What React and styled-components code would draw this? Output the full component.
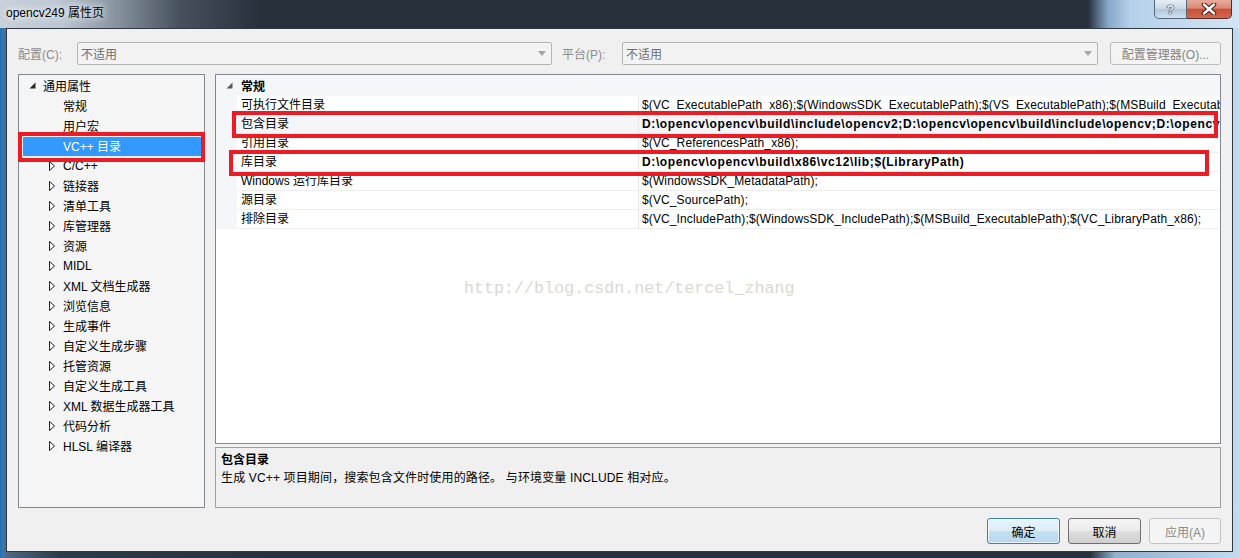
import React from "react";
import styled, { createGlobalStyle } from "styled-components";

const GlobalStyle = createGlobalStyle`
  html, body {
    margin: 0;
    padding: 0;
    background: #27313c;
  }
  body {
    font-family: "Liberation Sans", "Noto Sans CJK SC", sans-serif;
    font-size: 12px;
    color: #000;
  }
  * {
    box-sizing: border-box;
  }
`;

const Window = styled.div`
  width: 1239px;
  height: 558px;
  display: flex;
  flex-direction: column;
  overflow: hidden;
  background: linear-gradient(
    90deg,
    #1f6eb0 0px,
    #3a78ae 3px,
    #4f6984 6px,
    #2e3a47 60px,
    #27313c 300px,
    #27313c 1090px,
    #8fb0cf 1115px,
    #c4daef 1239px
  );
`;

const TitleBar = styled.div`
  height: 28px;
  display: flex;
  align-items: flex-start;
  padding-left: 6px;
  background: linear-gradient(
    90deg,
    #c9d1da 0px,
    #bcc7d2 60px,
    #8894a0 115px,
    #46515d 180px,
    #27313c 260px,
    #27313c 1088px,
    #86a7c7 1108px,
    #b6d0ea 1130px,
    #d2e4f5 1239px
  );
`;

const Caption = styled.div`
  margin-top: 6px;
  line-height: 14px;
  font-size: 12px;
  color: #000;
  text-shadow: 0 0 6px #fff, 0 0 10px rgba(255, 255, 255, 0.9);
`;

const CaptionButtons = styled.div`
  margin-left: auto;
  margin-right: 7px;
  display: flex;
`;

const HelpButton = styled.div`
  width: 33px;
  height: 19px;
  border: 1px solid #56677a;
  border-top: none;
  border-radius: 0 0 0 5px;
  background: linear-gradient(#e6edf5, #cad8e6 48%, #b3c6da 52%, #cfe0f0);
  display: flex;
  align-items: center;
  justify-content: center;
  font-weight: bold;
  font-size: 13px;
  color: #f4f7fa;
  text-shadow: 0 0 1px #1e2630, 0 0 1px #1e2630, 0 0 1px #1e2630;
`;

const CloseButton = styled.div`
  width: 45px;
  height: 19px;
  border: 1px solid #5a2a24;
  border-top: none;
  border-left: none;
  border-radius: 0 0 5px 0;
  background: linear-gradient(#e9ab9c, #d98a76 45%, #c8513a 52%, #d3694f);
  display: flex;
  align-items: center;
  justify-content: center;
`;

const Client = styled.div`
  flex: 1;
  margin: 0 6px 6px 6px;
  border: 1px solid #2e3944;
  background: #f0f0f0;
  display: flex;
  flex-direction: column;
  padding: 13px 11px 7px 11px;
`;

const ConfigRow = styled.div`
  height: 23px;
  display: flex;
  align-items: center;
`;

const FieldLabel = styled.div`
  width: ${(p) => p.w}px;
  margin-left: ${(p) => p.ml || 0}px;
  color: #8d8d8d;
`;

const Combo = styled.div`
  width: ${(p) => p.w}px;
  height: 23px;
  border: 1px solid #b4b4b4;
  border-radius: 2px;
  background: #f3f3f3;
  color: #6d6d6d;
  display: flex;
  align-items: center;
  padding: 0 5px 0 3px;
  justify-content: space-between;
`;

const ManagerButton = styled.div`
  width: 111px;
  height: 23px;
  margin-left: 12px;
  border: 1px solid #b8bcbf;
  border-radius: 3px;
  background: #f4f4f4;
  color: #838383;
  display: flex;
  align-items: center;
  justify-content: center;
`;

const Body = styled.div`
  margin-top: 9px;
  height: 434px;
  display: flex;
  gap: 10px;
`;

const TreePanel = styled.div`
  width: 187px;
  border: 1px solid #828790;
  background: #f5f5f5;
  padding-top: 2px;
  position: relative;
`;

const TreeRow = styled.div`
  height: 20px;
  display: flex;
  align-items: center;
  padding-bottom: 2px;
  margin: ${(p) => (p.selected ? "0 3px 0 4px" : "0")};
  padding-left: ${(p) => p.indent - (p.selected ? 4 : 0)}px;
  background: ${(p) => (p.selected ? "#3399ff" : "transparent")};
  border-bottom: 1px solid ${(p) => (p.selected ? "#e8f2fc" : "transparent")};
  color: ${(p) => (p.selected ? "#fff" : "#000")};
  white-space: nowrap;
`;

const Expander = styled.span`
  width: 14px;
  flex: none;
  display: flex;
  align-items: center;
`;

const Mark = styled.div`
  position: absolute;
  left: ${(p) => p.x}px;
  top: ${(p) => p.y}px;
  width: ${(p) => p.w}px;
  height: ${(p) => p.h}px;
  border: 4px solid #ed1c24;
  pointer-events: none;
`;

const RightColumn = styled.div`
  width: 1006px;
  display: flex;
  flex-direction: column;
  gap: 3px;
`;

const GridPanel = styled.div`
  height: 370px;
  border: 1px solid #828790;
  background: #fff;
  position: relative;
  overflow: hidden;
`;

const CategoryRow = styled.div`
  height: 21px;
  display: flex;
  align-items: center;
  background: #f4f6fa;
  padding-left: 10px;
  font-weight: bold;
`;

const CategoryArrow = styled.span`
  width: 15px;
  display: flex;
  align-items: center;
`;

const PropRow = styled.div`
  height: 19px;
  display: grid;
  grid-template-columns: 21px 401px 1fr;
`;

const Gutter = styled.div`
  background: #f4f6fa;
`;

const PropName = styled.div`
  padding-left: 4px;
  line-height: 19px;
  border-bottom: 1px solid #eeeeee;
  background: ${(p) => (p.selected ? "#f3f5f9" : "#fff")};
  white-space: nowrap;
  overflow: hidden;
`;

const PropValue = styled.div`
  padding-left: 3px;
  line-height: 19px;
  border-left: 1px solid #e6e6e6;
  border-bottom: 1px solid #eeeeee;
  background: ${(p) => (p.selected ? "#f3f5f9" : "#fff")};
  font-weight: ${(p) => (p.bold ? "bold" : "normal")};
  letter-spacing: ${(p) => (p.bold ? "0.62px" : "0.12px")};
  white-space: nowrap;
  overflow: hidden;
`;

const Watermark = styled.div`
  position: absolute;
  left: 248px;
  top: 204px;
  font-family: "Liberation Mono", monospace;
  font-size: 16.7px;
  color: #dcd8d0;
  white-space: nowrap;
  pointer-events: none;
`;

const DescPanel = styled.div`
  height: 61px;
  border: 1px solid #a0a0a0;
  background: #f0f0f0;
  padding: 3px 0 0 5px;
  line-height: 18px;
`;

const DescTitle = styled.div`
  font-weight: bold;
`;

const DescText = styled.div`
  letter-spacing: 0.15px;
`;

const ButtonRow = styled.div`
  margin-top: 10px;
  height: 26px;
  display: flex;
  justify-content: flex-end;
  gap: 8px;
`;

const DialogButton = styled.div`
  width: ${(p) => p.w || 73}px;
  height: 26px;
  border-radius: 3px;
  display: flex;
  align-items: center;
  justify-content: center;
  border: 1px solid
    ${(p) =>
      p.variant === "default" ? "#3c7fb1" : p.variant === "disabled" ? "#c0c4c6" : "#707070"};
  background: ${(p) =>
    p.variant === "default"
      ? "linear-gradient(#eaf4fb, #dcecf8 48%, #c4e0f3 52%, #b6d7ee)"
      : p.variant === "disabled"
      ? "#f4f4f4"
      : "linear-gradient(#f4f4f4, #ebebeb 48%, #dddddd 52%, #cfcfcf)"};
  color: ${(p) => (p.variant === "disabled" ? "#8a8a8a" : "#000")};
  box-shadow: ${(p) =>
    p.variant === "default" ? "inset 0 0 0 1px rgba(255,255,255,0.7)" : "none"};
`;

const DownArrow = () => (
  <svg width="8" height="5" viewBox="0 0 8 5">
    <polygon points="0,0 8,0 4,5" fill="#a6a6a6" />
  </svg>
);

const OpenArrow = ({ color = "#262626" }) => (
  <svg width="7" height="7" viewBox="0 0 7 7">
    <polygon points="6.5,0.5 6.5,6.5 0.5,6.5" fill={color} />
  </svg>
);

const ClosedArrow = () => (
  <svg width="6" height="10" viewBox="0 0 6 10">
    <polygon points="0.5,0.5 5.5,5 0.5,9.5" fill="#fff" stroke="#1e1e1e" strokeWidth="1" />
  </svg>
);

const CloseGlyph = () => (
  <svg width="16" height="12" viewBox="0 0 16 12">
    <path d="M3 1.5 L13 10.5 M13 1.5 L3 10.5" stroke="#4a1c16" strokeWidth="4.6" strokeLinecap="round" />
    <path d="M3 1.5 L13 10.5 M13 1.5 L3 10.5" stroke="#fff" strokeWidth="2.4" strokeLinecap="round" />
  </svg>
);

const treeItems = [
  { label: "通用属性", indent: 10, open: true },
  { label: "常规", indent: 30 },
  { label: "用户宏", indent: 30 },
  { label: "VC++ 目录", indent: 30, selected: true },
  { label: "C/C++", indent: 30, closed: true },
  { label: "链接器", indent: 30, closed: true },
  { label: "清单工具", indent: 30, closed: true },
  { label: "库管理器", indent: 30, closed: true },
  { label: "资源", indent: 30, closed: true },
  { label: "MIDL", indent: 30, closed: true },
  { label: "XML 文档生成器", indent: 30, closed: true },
  { label: "浏览信息", indent: 30, closed: true },
  { label: "生成事件", indent: 30, closed: true },
  { label: "自定义生成步骤", indent: 30, closed: true },
  { label: "托管资源", indent: 30, closed: true },
  { label: "自定义生成工具", indent: 30, closed: true },
  { label: "XML 数据生成器工具", indent: 30, closed: true },
  { label: "代码分析", indent: 30, closed: true },
  { label: "HLSL 编译器", indent: 30, closed: true },
];

const properties = [
  {
    name: "可执行文件目录",
    value:
      "$(VC_ExecutablePath_x86);$(WindowsSDK_ExecutablePath);$(VS_ExecutablePath);$(MSBuild_ExecutablePath);$(SystemRoot)\\SysWow64;$(FxCopDir);$(PATH);",
  },
  {
    name: "包含目录",
    value:
      "D:\\opencv\\opencv\\build\\include\\opencv2;D:\\opencv\\opencv\\build\\include\\opencv;D:\\opencv\\opencv\\build\\include;$(IncludePath)",
    bold: true,
    selected: true,
  },
  { name: "引用目录", value: "$(VC_ReferencesPath_x86);" },
  {
    name: "库目录",
    value: "D:\\opencv\\opencv\\build\\x86\\vc12\\lib;$(LibraryPath)",
    bold: true,
  },
  { name: "Windows 运行库目录", value: "$(WindowsSDK_MetadataPath);" },
  { name: "源目录", value: "$(VC_SourcePath);" },
  {
    name: "排除目录",
    value:
      "$(VC_IncludePath);$(WindowsSDK_IncludePath);$(MSBuild_ExecutablePath);$(VC_LibraryPath_x86);",
  },
];

const App = () => {
  return (
    <Window>
      <GlobalStyle />
      <TitleBar>
        <Caption>opencv249 属性页</Caption>
        <CaptionButtons>
          <HelpButton>?</HelpButton>
          <CloseButton>
            <CloseGlyph />
          </CloseButton>
        </CaptionButtons>
      </TitleBar>
      <Client>
        <ConfigRow>
          <FieldLabel w={59}>配置(C):</FieldLabel>
          <Combo w={475}>
            不适用
            <DownArrow />
          </Combo>
          <FieldLabel w={60} ml={10}>
            平台(P):
          </FieldLabel>
          <Combo w={476}>
            不适用
            <DownArrow />
          </Combo>
          <ManagerButton>配置管理器(O)...</ManagerButton>
        </ConfigRow>

        <Body>
          <TreePanel>
            {treeItems.map((item) => (
              <TreeRow key={item.label} indent={item.indent} selected={item.selected}>
                <Expander>
                  {item.open && <OpenArrow />}
                  {item.closed && <ClosedArrow />}
                </Expander>
                {item.label}
              </TreeRow>
            ))}
            <Mark x={-1} y={57} w={187} h={30} />
          </TreePanel>

          <RightColumn>
            <GridPanel>
              <CategoryRow>
                <CategoryArrow>
                  <OpenArrow color="#595959" />
                </CategoryArrow>
                常规
              </CategoryRow>
              {properties.map((prop) => (
                <PropRow key={prop.name}>
                  <Gutter />
                  <PropName selected={prop.selected}>{prop.name}</PropName>
                  <PropValue selected={prop.selected} bold={prop.bold}>
                    {prop.value}
                  </PropValue>
                </PropRow>
              ))}
              <Watermark>http://blog.csdn.net/tercel_zhang</Watermark>
              <Mark x={16} y={36} w={986} h={27} />
              <Mark x={13} y={75} w={980} h={26} />
            </GridPanel>
            <DescPanel>
              <DescTitle>包含目录</DescTitle>
              <DescText>生成 VC++ 项目期间，搜索包含文件时使用的路径。 与环境变量 INCLUDE 相对应。</DescText>
            </DescPanel>
          </RightColumn>
        </Body>

        <ButtonRow>
          <DialogButton variant="default">确定</DialogButton>
          <DialogButton>取消</DialogButton>
          <DialogButton variant="disabled" w={72}>
            应用(A)
          </DialogButton>
        </ButtonRow>
      </Client>
    </Window>
  );
};

export default App;
